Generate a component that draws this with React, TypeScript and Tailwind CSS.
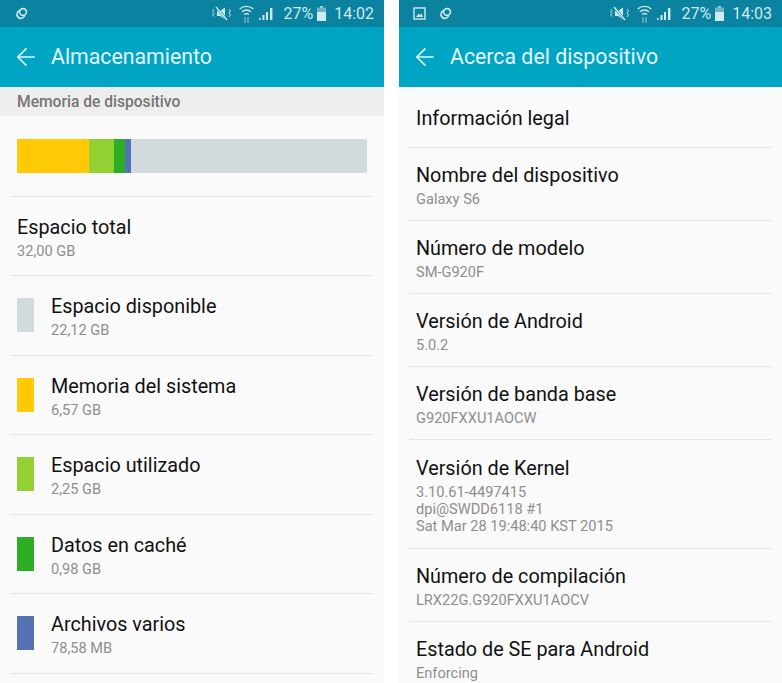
import { ArrowLeft } from "lucide-react";

const FONT = "font-['Roboto','Liberation_Sans',sans-serif]";

function LinkIcon() {
  return (
    <svg width="14" height="14" viewBox="0 0 14 14" fill="none" stroke="#cfeaf1" strokeWidth="1.6" className="shrink-0">
      <circle cx="9" cy="5" r="3.4" />
      <path d="M5.6 3.6 A4 4 0 1 0 10.6 9" />
    </svg>
  );
}

function PictureIcon() {
  return (
    <svg width="13" height="13" viewBox="0 0 13 13" fill="none" className="shrink-0">
      <rect x="1" y="1" width="11" height="11" stroke="#cfeaf1" strokeWidth="1.4" />
      <path d="M3 10 L5.5 6.5 L7 8 L8.5 6.5 L10 10 Z" fill="#cfeaf1" />
    </svg>
  );
}

function MuteIcon() {
  return (
    <svg width="21" height="15" viewBox="0 0 21 15" fill="none" className="shrink-0">
      <path d="M6 5 H9 L14 1.5 V13.5 L9 10 H6 Z" fill="#cfeaf1" />
      <path d="M5 1 L16 14" stroke="#0b829f" strokeWidth="2.6" />
      <path d="M5 1 L16 14" stroke="#cfeaf1" strokeWidth="1.4" />
      <path d="M1.5 3 L3 4.5 L1.5 6 L3 7.5 L1.5 9 L3 10.5 M18 3 L19.5 5 L18 7 L19.5 9 L18 11" stroke="#cfeaf1" strokeWidth="0.9" />
    </svg>
  );
}

function WifiIcon() {
  return (
    <svg width="15" height="20" viewBox="0 0 15 20" fill="none" stroke="#cfeaf1" className="shrink-0">
      <path d="M0.7 5 A10 10 0 0 1 14.3 5" strokeWidth="1.4" />
      <path d="M3 7.8 A6.5 6.5 0 0 1 12 7.8" strokeWidth="1.4" />
      <path d="M5.2 10.5 A3.4 3.4 0 0 1 9.8 10.5" strokeWidth="1.4" />
      <path d="M6 13 V19 M9 13 V19" strokeWidth="1.1" opacity="0.65" />
    </svg>
  );
}

function SignalIcon() {
  return (
    <svg width="14" height="14" viewBox="0 0 14 14" fill="#cfeaf1" className="shrink-0">
      <rect x="0" y="11" width="1.6" height="2" />
      <rect x="3.5" y="8" width="2" height="5" />
      <rect x="7" y="5" width="2" height="8" />
      <rect x="11" y="1" width="2.4" height="12" />
    </svg>
  );
}

function BatteryIcon() {
  return (
    <svg width="9" height="15" viewBox="0 0 9 15" className="shrink-0">
      <rect x="3" y="0" width="3" height="2" fill="#a9d3df" />
      <rect x="0" y="1.5" width="9" height="5" fill="#6fb2c6" />
      <rect x="0" y="6" width="9" height="9" fill="#cfeaf1" />
    </svg>
  );
}

function StatusBar({ time, picture }: { time: string; picture?: boolean }) {
  return (
    <div className="flex h-[27px] shrink-0 items-center bg-[#0b829f] pl-[14px] pr-[10px] text-[#cfeaf1]">
      {picture && (
        <div className="mr-[12px]">
          <PictureIcon />
        </div>
      )}
      <LinkIcon />
      <div className="ml-auto flex items-center">
        <MuteIcon />
        <div className="ml-[7px]">
          <WifiIcon />
        </div>
        <div className="ml-[5px]">
          <SignalIcon />
        </div>
        <span className="ml-[10px] text-[16px] leading-none">27%</span>
        <div className="ml-[4px]">
          <BatteryIcon />
        </div>
        <span className="ml-[8px] text-[16px] leading-none">{time}</span>
      </div>
    </div>
  );
}

function AppBar({ title }: { title: string }) {
  return (
    <div className="flex h-[60px] shrink-0 items-center bg-[#00a5c4] pl-[12px] text-[#e3f6fa]">
      <ArrowLeft size={28} strokeWidth={1.4} />
      <span className="ml-[11px] text-[21.3px] leading-none">{title}</span>
    </div>
  );
}

function Row({
  title,
  sub,
  swatch,
}: {
  title: string;
  sub: string;
  swatch?: string;
}) {
  return (
    <div className="flex h-[79.5px] items-center border-b border-[#e6e6e6] pl-[7px]">
      {swatch && <div className={`mr-[17px] h-[34px] w-[17px] ${swatch}`} />}
      <div className="pt-[4px]">
        <div className="text-[19.8px] leading-[24px] text-[#111]">{title}</div>
        <div className="mt-[3px] text-[14.6px] leading-[17px] text-[#8e8e8e]">{sub}</div>
      </div>
    </div>
  );
}

function Storage() {
  return (
    <div className="flex w-[384px] flex-col overflow-hidden bg-[#fafafa]">
      <StatusBar time="14:02" />
      <AppBar title="Almacenamiento" />
      <div className="flex h-[29px] shrink-0 items-center bg-[#eeeeee] pl-[17px] pt-[3px] text-[15.6px] font-medium text-[#757575]">
        Memoria de dispositivo
      </div>
      <div className="ml-[10px] mr-[11px]">
        <div className="flex h-[80.5px] items-center border-b border-[#e6e6e6] pl-[7px] pr-[6px]">
          <div className="flex h-[34px] w-full">
            <div className="w-[72px] bg-[#ffc905]" />
            <div className="w-[25px] bg-[#93d032]" />
            <div className="w-[11px] bg-[#2bae23]" />
            <div className="w-[6px] bg-[#5572b5]" />
            <div className="flex-1 bg-[#d1dbdd]" />
          </div>
        </div>
        <Row title="Espacio total" sub="32,00 GB" />
        <Row title="Espacio disponible" sub="22,12 GB" swatch="bg-[#d1dbdd]" />
        <Row title="Memoria del sistema" sub="6,57 GB" swatch="bg-[#ffc905]" />
        <Row title="Espacio utilizado" sub="2,25 GB" swatch="bg-[#93d032]" />
        <Row title="Datos en caché" sub="0,98 GB" swatch="bg-[#2bae23]" />
        <Row title="Archivos varios" sub="78,58 MB" swatch="bg-[#5572b5]" />
      </div>
    </div>
  );
}

function AboutRow({ title, lines, h }: { title: string; lines: string[]; h: string }) {
  return (
    <div className={`flex shrink-0 flex-col justify-center border-b border-[#e6e6e6] pl-[7px] pt-[3px] ${h}`}>
      <div className="text-[19.8px] leading-[24px] text-[#111]">{title}</div>
      {lines.map((l, i) => (
        <div key={l} className={`text-[14.6px] leading-[17px] text-[#8e8e8e] ${i === 0 ? "mt-[3px]" : ""}`}>
          {l}
        </div>
      ))}
    </div>
  );
}

function About() {
  return (
    <div className="flex w-[383px] flex-col overflow-hidden bg-[#fafafa]">
      <StatusBar time="14:03" picture />
      <AppBar title="Acerca del dispositivo" />
      <div className="mx-[10px]">
        <AboutRow title="Información legal" lines={[]} h="h-[61px]" />
        <AboutRow title="Nombre del dispositivo" lines={["Galaxy S6"]} h="h-[73px]" />
        <AboutRow title="Número de modelo" lines={["SM-G920F"]} h="h-[73px]" />
        <AboutRow title="Versión de Android" lines={["5.0.2"]} h="h-[73px]" />
        <AboutRow title="Versión de banda base" lines={["G920FXXU1AOCW"]} h="h-[73px]" />
        <AboutRow
          title="Versión de Kernel"
          lines={["3.10.61-4497415", "dpi@SWDD6118 #1", "Sat Mar 28 19:48:40 KST 2015"]}
          h="h-[109px]"
        />
        <AboutRow title="Número de compilación" lines={["LRX22G.G920FXXU1AOCV"]} h="h-[73px]" />
        <AboutRow title="Estado de SE para Android" lines={["Enforcing"]} h="h-[73px]" />
      </div>
    </div>
  );
}

export default function App() {
  return (
    <div className={`flex h-[683px] w-[782px] justify-between overflow-hidden bg-white ${FONT}`}>
      <Storage />
      <About />
    </div>
  );
}
